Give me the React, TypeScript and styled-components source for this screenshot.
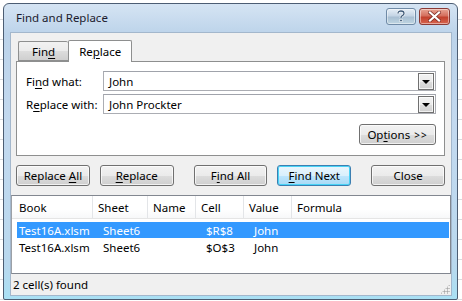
import React from 'react';
import styled, { createGlobalStyle } from 'styled-components';

const GlobalStyle = createGlobalStyle`
  html, body {
    margin: 0;
    padding: 0;
    width: 462px;
    height: 301px;
    overflow: hidden;
    background-color: #ffffff;
    background-image: repeating-linear-gradient(
      to bottom,
      transparent 0,
      transparent 19px,
      #d9dbde 19px,
      #d9dbde 20px
    );
  }
  * {
    box-sizing: border-box;
  }
`;

const font = `"Segoe UI", "Noto Sans", "Open Sans", sans-serif`;

const Window = styled.div`
  margin: 3px 0 0 3px;
  width: 455px;
  height: 297px;
  border: 1px solid #4c5d73;
  border-radius: 6px 6px 2px 2px;
  background: linear-gradient(to bottom, #d5e4f3 0, #bcd3ea 30px, #c3d9ef 120px, #b9d8ee 260px, #a9e0f4 100%);
  display: flex;
  flex-direction: column;
  padding: 0 5px 3px 6px;
  font-family: ${font};
  font-size: 11.5px;
  color: #000;
`;

const TitleBar = styled.div`
  height: 28px;
  display: flex;
  align-items: center;
  padding: 0 2px 2px 6px;
`;

const Title = styled.div`
  flex: 1;
  font-size: 11.5px;
  color: #1b1b2e;
  padding-top: 1px;
`;

const CaptionButton = styled.div<{ $close?: boolean }>`
  width: ${(p) => (p.$close ? 31 : 30)}px;
  height: 17px;
  margin-left: ${(p) => (p.$close ? 3 : 0)}px;
  margin-top: -2px;
  border: 1px solid ${(p) => (p.$close ? '#8a3a35' : '#6f8aa6')};
  border-radius: 3px;
  display: flex;
  align-items: center;
  justify-content: center;
  background: ${(p) =>
    p.$close
      ? 'linear-gradient(to bottom, #e8a595 0, #d46f5e 45%, #c2412e 55%, #d7654f 100%)'
      : 'linear-gradient(to bottom, #e6eef6 0, #c5d5e5 45%, #a9bfd3 55%, #bfd6e2 100%)'};
  box-shadow: inset 0 0 0 1px rgba(255, 255, 255, 0.45);
`;

const Client = styled.div`
  flex: 1;
  background: #f0f0f0;
  display: flex;
  flex-direction: column;
  border: 1px solid #a3b7cc;
`;

const TabStrip = styled.div`
  display: flex;
  align-items: flex-end;
  height: 28px;
  padding-left: 7px;
`;

const Tab = styled.div<{ $active?: boolean }>`
  height: ${(p) => (p.$active ? 22 : 20)}px;
  padding: 0 ${(p) => (p.$active ? 10 : 13)}px;
  margin-bottom: ${(p) => (p.$active ? -1 : 0)}px;
  border: 1px solid #8e8f8f;
  border-bottom: ${(p) => (p.$active ? 'none' : '1px solid #8e8f8f')};
  border-right: ${(p) => (p.$active ? '1px solid #8e8f8f' : 'none')};
  background: ${(p) => (p.$active ? '#ffffff' : 'linear-gradient(to bottom, #f2f2f2 0, #ebebeb 50%, #dddddd 51%, #cfcfcf 100%)')};
  display: flex;
  align-items: center;
  position: relative;
  z-index: ${(p) => (p.$active ? 2 : 1)};
  border-radius: 2px 2px 0 0;
`;

const TabPanel = styled.div`
  margin: 0 6px 0 5px;
  height: 95px;
  background: #ffffff;
  border: 1px solid #8e8f8f;
  padding: 9px 8px 0 9px;
  display: flex;
  flex-direction: column;
  gap: 3px;
`;

const FieldRow = styled.div`
  display: flex;
  align-items: center;
  height: 20px;
`;

const Label = styled.div`
  width: 77px;
`;

const Combo = styled.div`
  flex: 1;
  height: 20px;
  border: 1px solid #abadb3;
  border-top-color: #a0a3ab;
  display: flex;
  align-items: center;
  padding: 1px 1px 1px 5px;
  background: #fff;
`;

const ComboText = styled.div`
  flex: 1;
`;

const DropButton = styled.div`
  width: 16px;
  height: 17px;
  border: 1px solid #707070;
  background: linear-gradient(to bottom, #f2f2f2 0, #ebebeb 50%, #dddddd 51%, #cfcfcf 100%);
  box-shadow: inset 0 0 0 1px rgba(255, 255, 255, 0.7);
  display: flex;
  align-items: center;
  justify-content: center;
`;

const Arrow = styled.div`
  width: 0;
  height: 0;
  border-left: 4px solid transparent;
  border-right: 4px solid transparent;
  border-top: 4px solid #000;
  margin-top: 1px;
`;

const OptionsRow = styled.div`
  display: flex;
  justify-content: flex-end;
  margin-top: 7px;
`;

const Button = styled.div<{ $w?: number; $default?: boolean }>`
  width: ${(p) => p.$w ?? 74}px;
  height: 21px;
  border: 1px solid ${(p) => (p.$default ? '#3c7fb1' : '#707070')};
  border-radius: 3px;
  display: flex;
  align-items: center;
  justify-content: center;
  background: ${(p) =>
    p.$default
      ? 'linear-gradient(to bottom, #eaf6fd 0, #d9f0fc 50%, #bee6fd 51%, #a7d9f5 100%)'
      : 'linear-gradient(to bottom, #f2f2f2 0, #ebebeb 50%, #dddddd 51%, #cfcfcf 100%)'};
  box-shadow: inset 0 0 0 1px ${(p) => (p.$default ? '#48d3f6' : 'rgba(255,255,255,0.7)')};
  color: #000;
`;

const Small = styled.span`
  font-size: 10px;
  margin-left: 4px;
  letter-spacing: 1px;
`;

const ButtonRow = styled.div`
  display: flex;
  align-items: center;
  margin: 9px 6px 0 5px;
`;

const Gap = styled.div<{ $w: number }>`
  width: ${(p) => p.$w}px;
`;

const ListBox = styled.div`
  margin-top: 9px;
  height: 79px;
  background: #ffffff;
  border: 1px solid #828790;
  border-left-color: #9ca0a6;
  display: flex;
  flex-direction: column;
`;

const HeaderRow = styled.div`
  display: grid;
  grid-template-columns: 81px 55px 48px 48px 48px 1fr;
  height: 23px;
  border-bottom: 1px solid #e5e5e5;
  background: linear-gradient(to bottom, #ffffff 0, #ffffff 60%, #f7f8f9 100%);
`;

const HeaderCell = styled.div<{ $first?: boolean }>`
  display: flex;
  align-items: center;
  padding-left: ${(p) => (p.$first ? 7 : 5)}px;
  border-right: 1px solid #e3e5e8;
  &:last-child {
    border-right: none;
  }
`;

const Row = styled.div<{ $selected?: boolean }>`
  display: grid;
  grid-template-columns: 81px 55px 48px 48px 48px 1fr;
  height: 16px;
  margin: ${(p) => (p.$selected ? '3px 1px 1px 5px' : '0 1px 0 5px')};
  background: ${(p) => (p.$selected ? '#3399ff' : 'transparent')};
  color: ${(p) => (p.$selected ? '#ffffff' : '#000000')};
`;

const Cell = styled.div<{ $first?: boolean }>`
  display: flex;
  align-items: center;
  padding-left: ${(p) => (p.$first ? 2 : 5)}px;
  white-space: nowrap;
`;

const StatusBar = styled.div`
  flex: 1;
  display: flex;
  align-items: center;
  padding-left: 2px;
  position: relative;
`;

const Grip = styled.div`
  position: absolute;
  right: 1px;
  bottom: 1px;
  width: 10px;
  height: 10px;
  background-image: radial-gradient(circle, #a9a9a9 0.9px, transparent 1.2px);
  background-size: 3px 3px;
  clip-path: polygon(100% 0, 100% 100%, 0 100%);
`;

const U = styled.span`
  text-decoration: underline;
  text-underline-offset: 2px;
`;

const headers = ['Book', 'Sheet', 'Name', 'Cell', 'Value', 'Formula'];
const results = [
  { book: 'Test16A.xlsm', sheet: 'Sheet6', name: '', cell: '$R$8', value: 'John', formula: '' },
  { book: 'Test16A.xlsm', sheet: 'Sheet6', name: '', cell: '$O$3', value: 'John', formula: '' },
];

export default function App() {
  return (
    <>
      <GlobalStyle />
      <Window>
        <TitleBar>
          <Title>Find and Replace</Title>
          <CaptionButton>
            <svg width="10" height="12" viewBox="0 0 10 12">
              <path
                d="M2 3.5 C2 1.5 3.5 1 5 1 C6.8 1 8 2 8 3.5 C8 5 6.5 5.5 5.5 6.3 C5 6.7 5 7.2 5 8"
                fill="none"
                stroke="#ffffff"
                strokeWidth="2.6"
              />
              <path
                d="M2 3.5 C2 1.5 3.5 1 5 1 C6.8 1 8 2 8 3.5 C8 5 6.5 5.5 5.5 6.3 C5 6.7 5 7.2 5 8"
                fill="none"
                stroke="#3f5a78"
                strokeWidth="1.3"
              />
              <rect x="3.8" y="9.3" width="2.4" height="2.4" fill="#3f5a78" stroke="#fff" strokeWidth="0.6" />
            </svg>
          </CaptionButton>
          <CaptionButton $close>
            <svg width="13" height="11" viewBox="0 0 13 11">
              <path d="M2 1.5 L11 9.5 M11 1.5 L2 9.5" stroke="#7a2a22" strokeWidth="3.6" strokeLinecap="square" />
              <path d="M2 1.5 L11 9.5 M11 1.5 L2 9.5" stroke="#ffffff" strokeWidth="2.2" strokeLinecap="square" />
            </svg>
          </CaptionButton>
        </TitleBar>
        <Client>
          <TabStrip>
            <Tab>
              <span>
                Fin<U>d</U>
              </span>
            </Tab>
            <Tab $active>
              <span>
                Re<U>p</U>lace
              </span>
            </Tab>
          </TabStrip>
          <TabPanel>
            <FieldRow>
              <Label>
                Fi<U>n</U>d what:
              </Label>
              <Combo>
                <ComboText>John</ComboText>
                <DropButton>
                  <Arrow />
                </DropButton>
              </Combo>
            </FieldRow>
            <FieldRow>
              <Label>
                R<U>e</U>place with:
              </Label>
              <Combo>
                <ComboText>John Prockter</ComboText>
                <DropButton>
                  <Arrow />
                </DropButton>
              </Combo>
            </FieldRow>
            <OptionsRow>
              <Button $w={77}>
                Op<U>t</U>ions<Small>&gt;&gt;</Small>
              </Button>
            </OptionsRow>
          </TabPanel>
          <ButtonRow>
            <Button>
              Replace&nbsp;<U>A</U>ll
            </Button>
            <Gap $w={10} />
            <Button>
              <U>R</U>eplace
            </Button>
            <Gap $w={20} />
            <Button>
              F<U>i</U>nd All
            </Button>
            <Gap $w={10} />
            <Button $default>
              <U>F</U>ind Next
            </Button>
            <Gap $w={20} />
            <Button>Close</Button>
          </ButtonRow>
          <ListBox>
            <HeaderRow>
              {headers.map((h, i) => (
                <HeaderCell key={h} $first={i === 0}>
                  {h}
                </HeaderCell>
              ))}
            </HeaderRow>
            {results.map((r, i) => (
              <Row key={r.cell} $selected={i === 0}>
                <Cell $first>{r.book}</Cell>
                <Cell>{r.sheet}</Cell>
                <Cell>{r.name}</Cell>
                <Cell>{r.cell}</Cell>
                <Cell>{r.value}</Cell>
                <Cell>{r.formula}</Cell>
              </Row>
            ))}
          </ListBox>
          <StatusBar>
            2 cell(s) found
            <Grip />
          </StatusBar>
        </Client>
      </Window>
    </>
  );
}
